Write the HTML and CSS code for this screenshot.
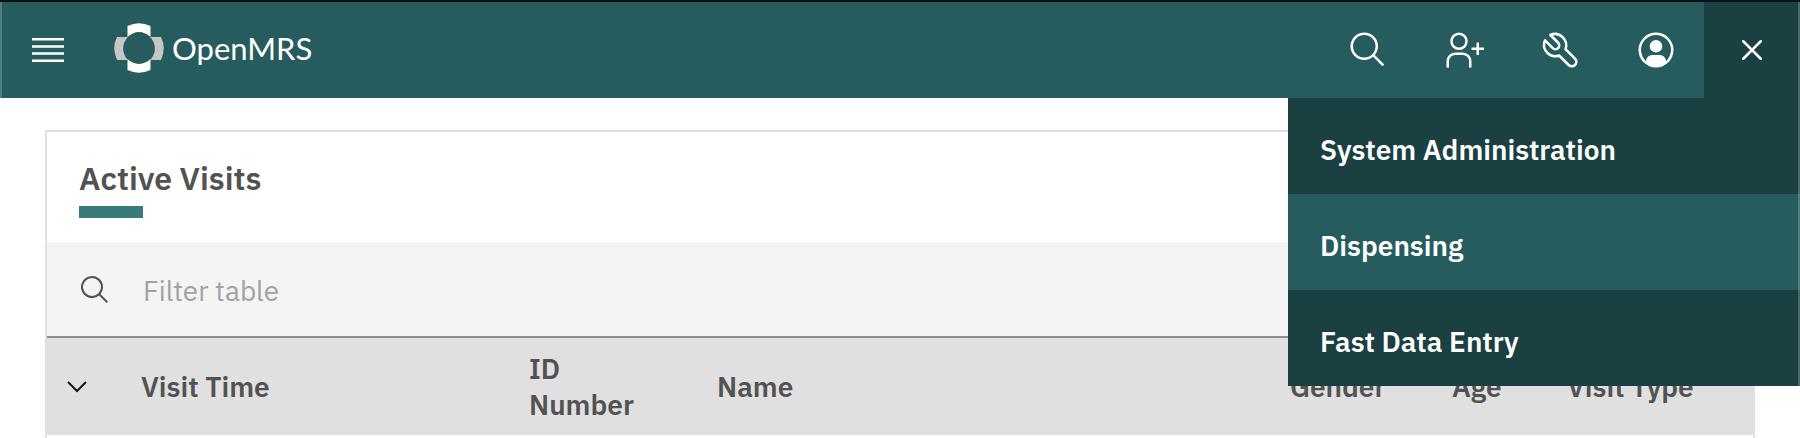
FILE: index.html
```html
<!DOCTYPE html>
<html lang="en">
<head>
<meta charset="utf-8">
<title>OpenMRS</title>
<link rel="stylesheet" href="styles.css">
</head>
<body>
<header class="topbar">
  <button class="bar-button menu-button" aria-label="Menu">
    <svg viewBox="0 0 32 24" width="32" height="24"><path d="M0 0h32v2.500H0zM0 7.200h32v2.500H0zM0 14.300h32v2.500H0zM0 21.500h32v2.500H0z"/></svg>
  </button>
  <a class="brand" href="#" aria-label="OpenMRS">
    <svg class="brand-mark" viewBox="0 0 50 50" width="50" height="50">
      <path class="mark-white" d="M13.500 3Q25-2.500 36.500 3V14A16 16 0 0 0 13.500 14zM13.500 47Q25 52.500 36.500 47V36A16 16 0 0 1 13.500 36z"/>
      <path class="mark-grey" d="M3 14Q-2.500 25 3 37H14A16 16 0 0 1 14 14zM47 14Q52.500 25 47 37H36A16 16 0 0 0 36 14z"/>
    </svg>
    <span class="brand-name">OpenMRS</span>
  </a>
  <nav class="actions">
    <button class="bar-button" aria-label="Search"><svg viewBox="0 0 32 32" width="40" height="40"><path d="M29,27.5859l-7.5521-7.5521a11.0177,11.0177,0,1,0-1.4141,1.4141L27.5859,29ZM4,13a9,9,0,1,1,9,9A9.01,9.01,0,0,1,4,13Z"/></svg></button>
    <button class="bar-button" aria-label="Add patient"><svg viewBox="0 0 32 32" width="40" height="40"><path d="M32 14h-4v-4h-2v4h-4v2h4v4h2v-4h4v-2zM12 4a5 5 0 1 1-5 5 5 5 0 0 1 5-5m0-2a7 7 0 1 0 7 7 7 7 0 0 0-7-7zM22 30h-2v-5a5 5 0 0 0-5-5H9a5 5 0 0 0-5 5v5H2v-5a7 7 0 0 1 7-7h6a7 7 0 0 1 7 7z"/></svg></button>
    <button class="bar-button" aria-label="Tools"><svg class="line-icon" viewBox="0 0 32 32" width="40" height="40"><path d="M8.300 4A9 9 0 0 1 20.400 15.300L28 22.900A3.600 3.600 0 0 1 22.900 28L15.300 20.400A9 9 0 0 1 4 8.300L10.200 14.500A3 3 0 0 0 14.500 10.200Z"/></svg></button>
    <button class="bar-button" aria-label="User"><svg viewBox="0 0 32 32" width="40" height="40"><path d="M16 8a5 5 0 1 0 5 5 5 5 0 0 0-5-5z"/><path d="M16 2a14 14 0 1 0 14 14A14.016 14.016 0 0 0 16 2zm7.993 22.926A5.002 5.002 0 0 0 19 20h-6a5.002 5.002 0 0 0-4.992 4.926 12 12 0 1 1 15.985 0z"/></svg></button>
    <button class="bar-button is-open" aria-label="Close" aria-expanded="true"><svg class="line-icon close-icon" viewBox="0 0 32 32" width="40" height="40"><path d="M9 9L23 23M23 9L9 23"/></svg></button>
  </nav>
  <nav class="app-menu">
    <a class="app-link" href="#">System Administration</a>
    <a class="app-link is-current" href="#">Dispensing</a>
    <a class="app-link" href="#">Fast Data Entry</a>
  </nav>
</header>
<main class="card">
  <h1 class="card-title">Active Visits</h1>
  <label class="filter">
    <svg viewBox="0 0 32 32" width="32" height="32"><path d="M29,27.5859l-7.5521-7.5521a11.0177,11.0177,0,1,0-1.4141,1.4141L27.5859,29ZM4,13a9,9,0,1,1,9,9A9.01,9.01,0,0,1,4,13Z"/></svg>
    <input class="filter-input" type="text" placeholder="Filter table" aria-label="Filter table">
  </label>
  <table class="visits">
    <colgroup><col class="col-expand"><col class="col-time"><col class="col-id"><col class="col-name"><col class="col-gender"><col class="col-age"><col class="col-type"></colgroup>
    <thead>
      <tr>
        <th><button class="expand" aria-label="Expand all rows"><svg viewBox="0 0 20 12" width="20" height="12"><path d="M1 1L10 10L19 1"/></svg></button></th>
        <th>Visit Time</th><th>ID Number</th><th>Name</th><th>Gender</th><th>Age</th><th>Visit Type</th>
      </tr>
    </thead>
  </table>
</main>
</body>
</html>
```
FILE: styles.css
```css
* { box-sizing: border-box; }
body {
  margin: 0;
  background: #fff;
  color: #525252;
  font-family: "IBM Plex Sans", "Noto Sans", sans-serif;
  font-size: 28px;
}
button { border: 0; padding: 0; background: none; font: inherit; color: inherit; cursor: pointer; }
svg { display: block; fill: currentColor; }
.topbar {
  position: relative;
  display: flex;
  align-items: center;
  height: 98px;
  border-top: 2px solid #0c0f10;
  background: #265c5e;
  box-shadow: inset 2px 0 #4f7c7e;
  color: #fff;
}
.bar-button { display: grid; place-items: center; width: 96px; height: 96px; }
.is-open { background: #1a4042; box-shadow: inset -2px 0 #48686a; }
.brand { display: flex; align-items: center; gap: 8px; margin-left: 18px; padding-bottom: 4px; color: inherit; text-decoration: none; }
.mark-white { fill: #fff; }
.mark-grey { fill: #c6c6c6; }
.brand-name { font-family: Lato, sans-serif; font-size: 31px; line-height: 40px; }
.actions { display: flex; margin-left: auto; }
.line-icon { fill: none; stroke: currentColor; stroke-width: 2; stroke-linejoin: round; }
.close-icon { stroke-linecap: round; }
.app-menu {
  position: absolute;
  top: 96px;
  right: 0;
  z-index: 2;
  width: 512px;
  background: #1a4042;
}
.app-link {
  display: flex;
  align-items: center;
  height: 96px;
  padding: 6px 32px 0;
  box-shadow: inset -2px 0 #48686a;
  color: #fff;
  font-weight: 600;
  text-decoration: none;
}
.is-current { background: #265c5e; box-shadow: inset -2px 0 #517d7e; }
.card { margin: 32px 45px 0; border: 2px solid #e0e0e0; border-bottom: 0; min-height: 320px; }
.card-title {
  margin: 0;
  padding: 26px 32px 24px;
  font-size: 32px;
  line-height: 40px;
  font-weight: 600;
}
.card-title::after { content: ""; display: block; width: 64px; height: 12px; margin-top: 8px; background: #387b7a; }
.filter {
  display: flex;
  align-items: center;
  gap: 32px;
  height: 96px;
  padding: 2px 0 0 32px;
  border-bottom: 2px solid #8d8d8d;
  background: #f4f4f4;
}
.filter-input { flex: 1; border: 0; padding: 0; background: none; outline: 0; font: inherit; color: inherit; }
.filter-input::placeholder { color: #a2a2a2; opacity: 1; }
.visits { width: 100%; table-layout: fixed; border-collapse: collapse; background: #e0e0e0; }
.visits th { height: 97px; padding: 0 48px 0 0; text-align: left; font-weight: 600; line-height: 36px; }
.col-expand { width: 94px; }
.col-time { width: 388px; }
.col-id { width: 188px; }
.col-name { width: 573px; }
.col-gender { width: 162px; }
.col-age { width: 115px; }
.expand { display: block; margin-left: 20px; color: #161616; }
.expand path { fill: none; stroke: currentColor; stroke-width: 2; }
```
